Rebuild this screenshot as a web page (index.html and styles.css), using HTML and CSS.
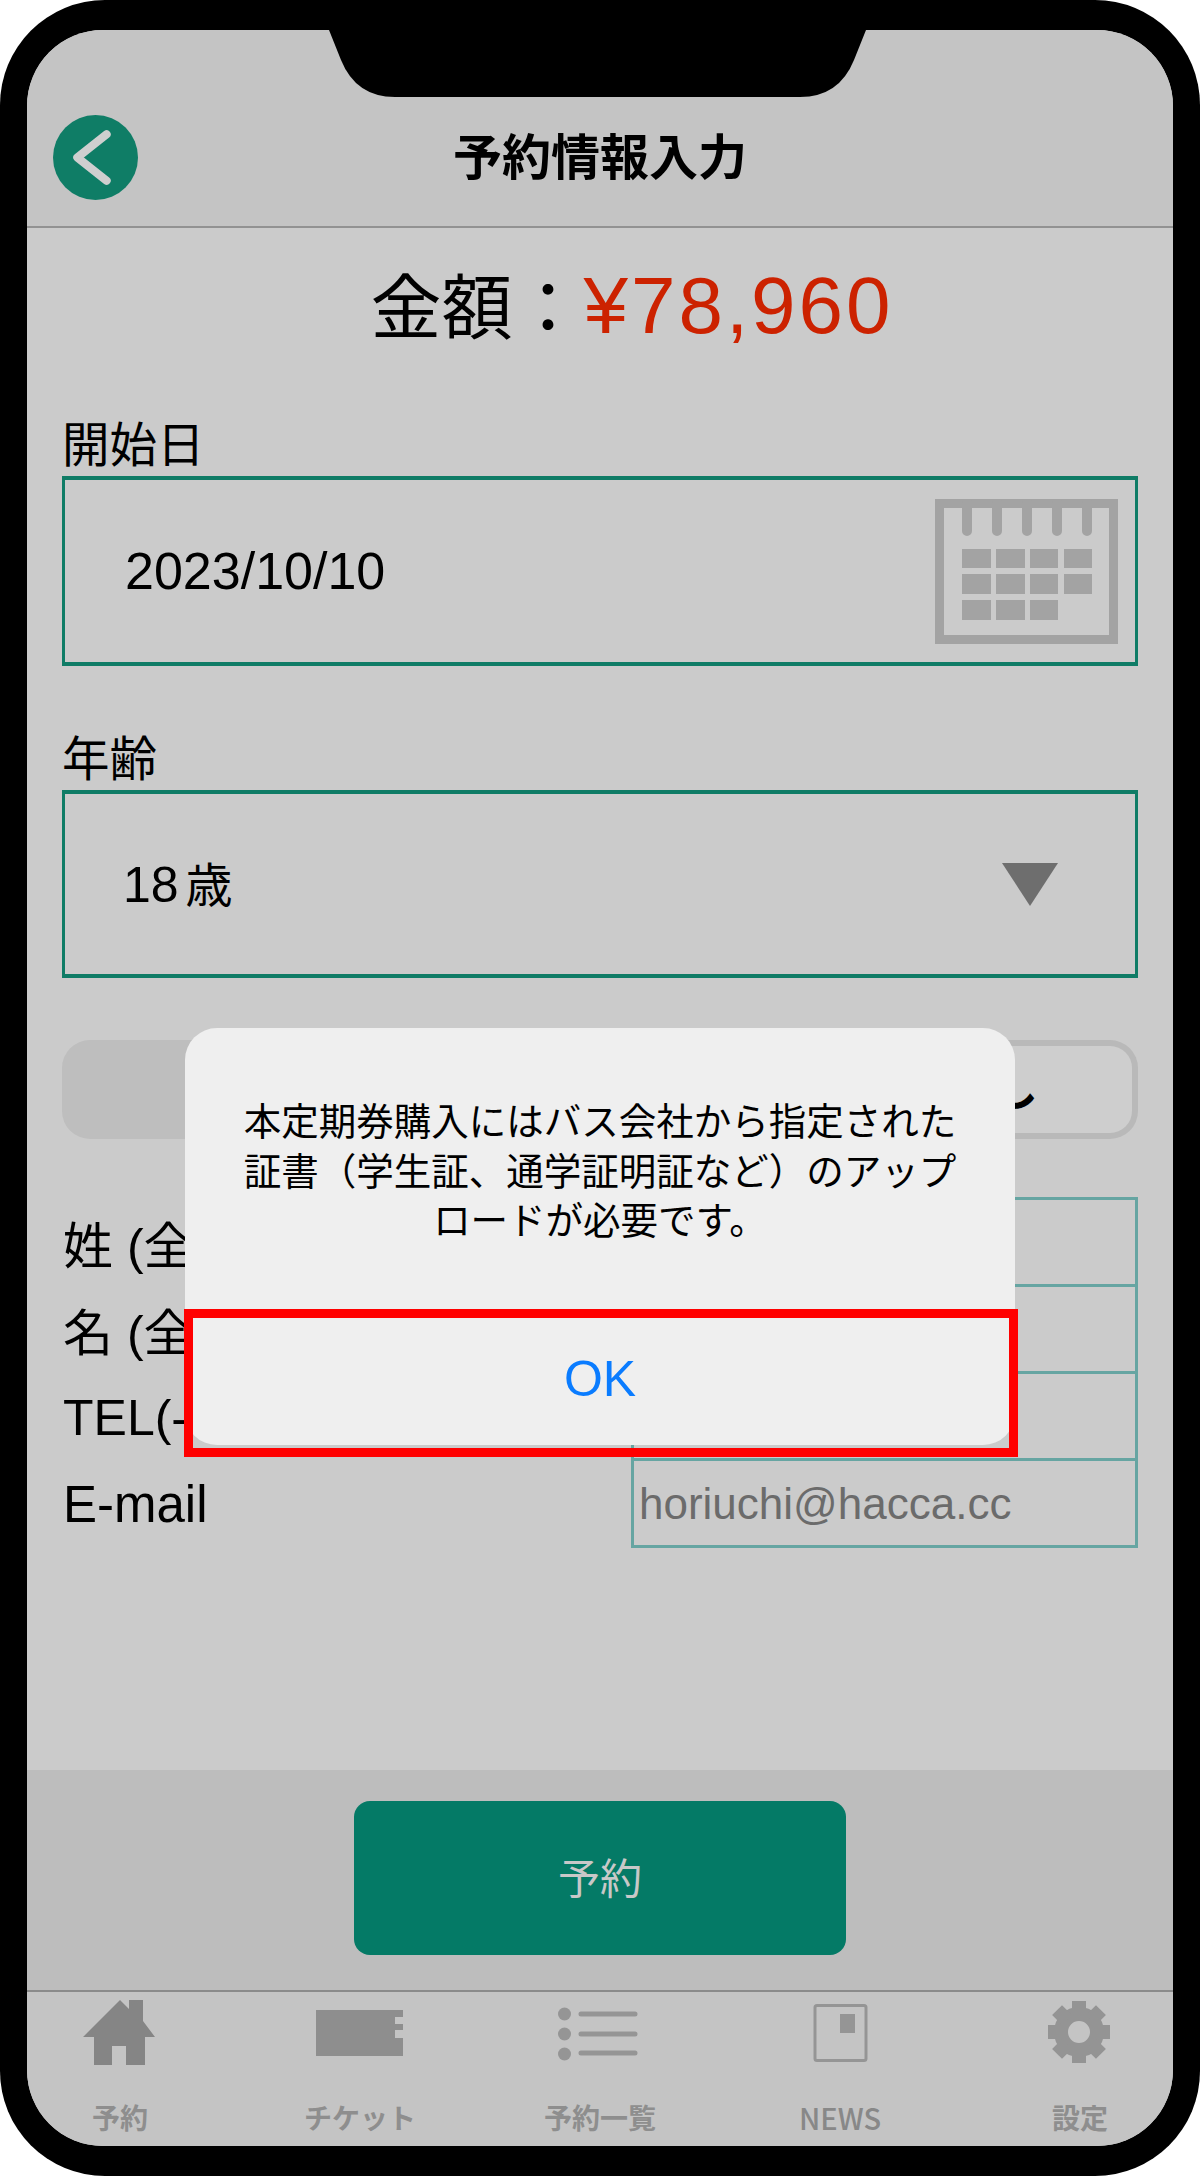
FILE: index.html
```html
<!DOCTYPE html>
<html lang="ja">
<head>
    <meta charset="UTF-8">
    <title>予約情報入力</title>
    <link rel="stylesheet" href="styles.css">
</head>
<body>
    <div class="phone">
        <div class="screen">
            <header class="header">
                <svg class="back" viewBox="0 0 84 84">
                    <circle cx="42" cy="42" r="42" fill="#0f7d66"/>
                    <path d="M53 19 L24 42 L53 65" fill="none" stroke="#cfcfcf" stroke-width="8" stroke-linecap="round" stroke-linejoin="round"/>
                </svg>
                <h1 class="title">予約情報入力</h1>
            </header>

            <main class="main">
                <div class="amount">金額：<span class="price">¥78,960</span></div>

                <div class="label">開始日</div>
                <div class="field field-date">
                    <span>2023/10/10</span>
                    <svg class="calendar" viewBox="0 0 183 145">
                        <rect x="4.500" y="4.500" width="174" height="136" fill="none" stroke="#a3a3a3" stroke-width="9"/>
                        <path d="M32 4 V32 M62 4 V32 M92 4 V32 M122 4 V32 M152 4 V32" stroke="#a3a3a3" stroke-width="10" stroke-linecap="round"/>
                        <g fill="#a3a3a3">
                            <rect x="27" y="50" width="29" height="19"/>
                            <rect x="61" y="50" width="29" height="19"/>
                            <rect x="95" y="50" width="28" height="19"/>
                            <rect x="129" y="50" width="28" height="19"/>
                            <rect x="27" y="75" width="29" height="20"/>
                            <rect x="61" y="75" width="29" height="20"/>
                            <rect x="95" y="75" width="28" height="20"/>
                            <rect x="129" y="75" width="28" height="20"/>
                            <rect x="27" y="101" width="29" height="20"/>
                            <rect x="61" y="101" width="29" height="20"/>
                            <rect x="95" y="101" width="28" height="20"/>
                        </g>
                    </svg>
                </div>

                <div class="label label-age">年齢</div>
                <div class="field field-age">
                    <span class="age-value">18 <span class="unit">歳</span></span>
                    <div class="arrow"></div>
                </div>

                <div class="segment">
                    <div class="segment-item"></div>
                    <div class="segment-item selected">なし</div>
                </div>

                <div class="form">
                    <div class="row">
                        <div class="row-label">姓 (全角)</div>
                        <div class="row-input"></div>
                    </div>
                    <div class="row">
                        <div class="row-label">名 (全角)</div>
                        <div class="row-input"></div>
                    </div>
                    <div class="row">
                        <div class="row-label label-tel">TEL(-ハイフンなし)</div>
                        <div class="row-input"></div>
                    </div>
                    <div class="row">
                        <div class="row-label label-mail">E-mail</div>
                        <div class="row-input">horiuchi@hacca.cc</div>
                    </div>
                </div>
            </main>

            <div class="action-bar">
                <div class="reserve">予約</div>
            </div>

            <nav class="tabs">
                <div class="tab">
                    <svg class="tab-icon" viewBox="60 1998 120 68">
                        <path d="M83 2036 L120 1999 L129 2008 V1999 H143 V2020 L155 2036 H145 V2064 H126 V2045 H112 V2064 H94 V2036 Z" fill="#858585"/>
                    </svg>
                    <span>予約</span>
                </div>
                <div class="tab">
                    <svg class="tab-icon" viewBox="300 1998 120 68">
                        <path d="M316 2009 H403 V2016 H395 V2023 H403 V2029 H395 V2037 H403 V2055 H316 Z" fill="#8e8e8e"/>
                    </svg>
                    <span>チケット</span>
                </div>
                <div class="tab">
                    <svg class="tab-icon" viewBox="540 1998 120 68">
                        <g fill="#959595">
                            <circle cx="564.500" cy="2013" r="6.500"/>
                            <circle cx="564.500" cy="2033" r="6.500"/>
                            <circle cx="564.500" cy="2053" r="6.500"/>
                        </g>
                        <path d="M581 2013 H635 M581 2033 H635 M581 2052 H635" stroke="#959595" stroke-width="5" stroke-linecap="round"/>
                    </svg>
                    <span>予約一覧</span>
                </div>
                <div class="tab">
                    <svg class="tab-icon" viewBox="780 1998 120 68">
                        <rect x="815" y="2004.500" width="51" height="55" rx="2" fill="none" stroke="#959595" stroke-width="3"/>
                        <rect x="840" y="2013" width="15" height="19" fill="#959595"/>
                    </svg>
                    <span class="tab-news">NEWS</span>
                </div>
                <div class="tab">
                    <svg class="tab-icon" viewBox="-59 -33 120 68">
                        <circle r="18" fill="none" stroke="#949494" stroke-width="14"/>
                        <g fill="#949494">
                            <rect x="-7" y="-31" width="14" height="14"/>
                            <rect x="-7" y="-31" width="14" height="14" transform="rotate(45)"/>
                            <rect x="-7" y="-31" width="14" height="14" transform="rotate(90)"/>
                            <rect x="-7" y="-31" width="14" height="14" transform="rotate(135)"/>
                            <rect x="-7" y="-31" width="14" height="14" transform="rotate(180)"/>
                            <rect x="-7" y="-31" width="14" height="14" transform="rotate(225)"/>
                            <rect x="-7" y="-31" width="14" height="14" transform="rotate(270)"/>
                            <rect x="-7" y="-31" width="14" height="14" transform="rotate(315)"/>
                        </g>
                    </svg>
                    <span>設定</span>
                </div>
            </nav>
        </div>

        <svg class="notch" viewBox="0 0 537 67">
            <path d="M0 0 L12 30 Q27 67 66 67 H471 Q510 67 525 30 L537 0 Z" fill="#000"/>
        </svg>

        <div class="dialog">
            <p class="dialog-text">本定期券購入にはバス会社から指定された証書（学生証、通学証明証など）のアップロードが必要です。</p>
            <div class="dialog-ok">OK</div>
        </div>
        <div class="highlight"></div>
    </div>
</body>
</html>
```

FILE: styles.css
```css
body {
    margin: 0;
    background-color: #fff;
    font-family: "Liberation Sans", "Noto Sans CJK JP", sans-serif;
    color: #000;
}
.phone {
    position: relative;
    width: 1200px;
    height: 2176px;
    box-sizing: border-box;
    padding: 30px 27px;
    background-color: #000;
    border-radius: 105px;
}
.screen {
    display: flex;
    flex-direction: column;
    height: 2116px;
    border-radius: 76px;
    overflow: hidden;
    background-color: #cbcbcb;
}
.notch {
    position: absolute;
    left: 329px;
    top: 30px;
    width: 537px;
    height: 67px;
}

/* header */
.header {
    position: relative;
    height: 196px;
    display: flex;
    align-items: flex-end;
    justify-content: center;
    background-color: #c4c4c4;
    border-bottom: 2px solid #929292;
}
.back {
    position: absolute;
    left: 26px;
    top: 85px;
    width: 85px;
    height: 85px;
}
.title {
    margin: 0 0 38px;
    font-size: 49px;
    line-height: 60px;
    font-weight: 700;
}

/* main content */
.main {
    flex: 1;
    padding: 38px 35px 0 35px;
}
.amount {
    padding-left: 64px;
    text-align: center;
    font-size: 71px;
    line-height: 80px;
    margin-bottom: 67px;
}
.price {
    font-size: 80px;
    letter-spacing: 3px;
    color: #cc2200;
}
.label {
    font-size: 47.500px;
    line-height: 60px;
}
.label-age {
    margin-top: 64px;
}
.field {
    display: flex;
    align-items: center;
    justify-content: space-between;
    box-sizing: border-box;
    border: 3px solid #0f7c66;
    border-width: 4px 3px;
    padding-left: 60px;
    font-size: 52px;
}
.field-date {
    height: 190px;
    padding-right: 17px;
}
.field-age {
    height: 188px;
    padding-right: 77px;
}
.age-value {
    margin-left: -2px;
    margin-bottom: 5px;
    font-size: 50px;
    word-spacing: -7px;
}
.unit {
    font-size: 47px;
}
.calendar {
    width: 183px;
    height: 145px;
}
.arrow {
    width: 0;
    height: 0;
    border-left: 28px solid transparent;
    border-right: 28px solid transparent;
    border-top: 43px solid #6e6e6e;
}

/* segment */
.segment {
    display: flex;
    height: 99px;
    margin-top: 62px;
}
.segment-item {
    flex: 1;
    display: flex;
    align-items: center;
    justify-content: center;
    background-color: #bebebe;
    border-radius: 28px 0 0 28px;
    font-size: 46px;
}
.segment-item.selected {
    justify-content: flex-end;
    box-sizing: border-box;
    padding-right: 94px;
    padding-bottom: 10px;
    font-weight: 700;
    background-color: #cecece;
    border: 6px solid #b9b9b9;
    border-left: none;
    border-radius: 0 28px 28px 0;
}

/* form */
.form {
    margin-top: 58px;
}
.row {
    display: flex;
    align-items: center;
    height: 87px;
}
.row-label {
    flex: 1;
    padding-left: 1px;
    padding-top: 2px;
    font-size: 50px;
    white-space: nowrap;
}
.label-tel {
    padding-top: 0;
    padding-bottom: 4px;
}
.label-mail {
    padding-top: 6px;
    font-size: 51px;
}
.row-input {
    box-sizing: border-box;
    width: 507px;
    height: 90px;
    margin-bottom: -3px;
    padding-left: 5px;
    border: 3px solid #66a5a2;
    font-size: 44px;
    line-height: 86px;
    color: #6b6b6b;
}

/* bottom */
.action-bar {
    height: 220px;
    display: flex;
    justify-content: center;
    padding-top: 31px;
    box-sizing: border-box;
    background-color: #bdbdbd;
}
.reserve {
    width: 492px;
    height: 154px;
    border-radius: 16px;
    background-color: #047a66;
    color: #c8c8c8;
    font-size: 42px;
    line-height: 158px;
    text-align: center;
}
.tabs {
    display: flex;
    justify-content: space-between;
    height: 154px;
    padding: 0 33px;
    background-color: #c4c4c4;
    border-top: 2px solid #8b8b8b;
}
.tab {
    width: 120px;
    display: flex;
    flex-direction: column;
    align-items: center;
    padding-top: 7px;
    font-family: "Noto Sans CJK JP", "Liberation Sans", sans-serif;
    font-size: 28px;
    line-height: 40px;
    font-weight: 700;
    color: #8e8e8e;
    white-space: nowrap;
}
.tab-icon {
    width: 120px;
    height: 68px;
    margin-bottom: 30px;
}
.tab-news {
    font-weight: 500;
    font-size: 29px;
    color: #888;
}

/* alert */
.dialog {
    position: absolute;
    left: 185px;
    top: 1028px;
    width: 830px;
    height: 417px;
    display: flex;
    flex-direction: column;
    background-color: #efefef;
    border-radius: 32px;
}
.dialog-text {
    flex: 1;
    margin: 0;
    padding: 70px 55px 0;
    font-size: 37.500px;
    line-height: 49.500px;
    text-align: center;
}
.dialog-ok {
    height: 137px;
    text-align: center;
    font-size: 50px;
    line-height: 142px;
    color: #0a7cff;
}
.highlight {
    position: absolute;
    left: 184px;
    top: 1309px;
    width: 834px;
    height: 148px;
    box-sizing: border-box;
    border: 9px solid #f00;
}
```
